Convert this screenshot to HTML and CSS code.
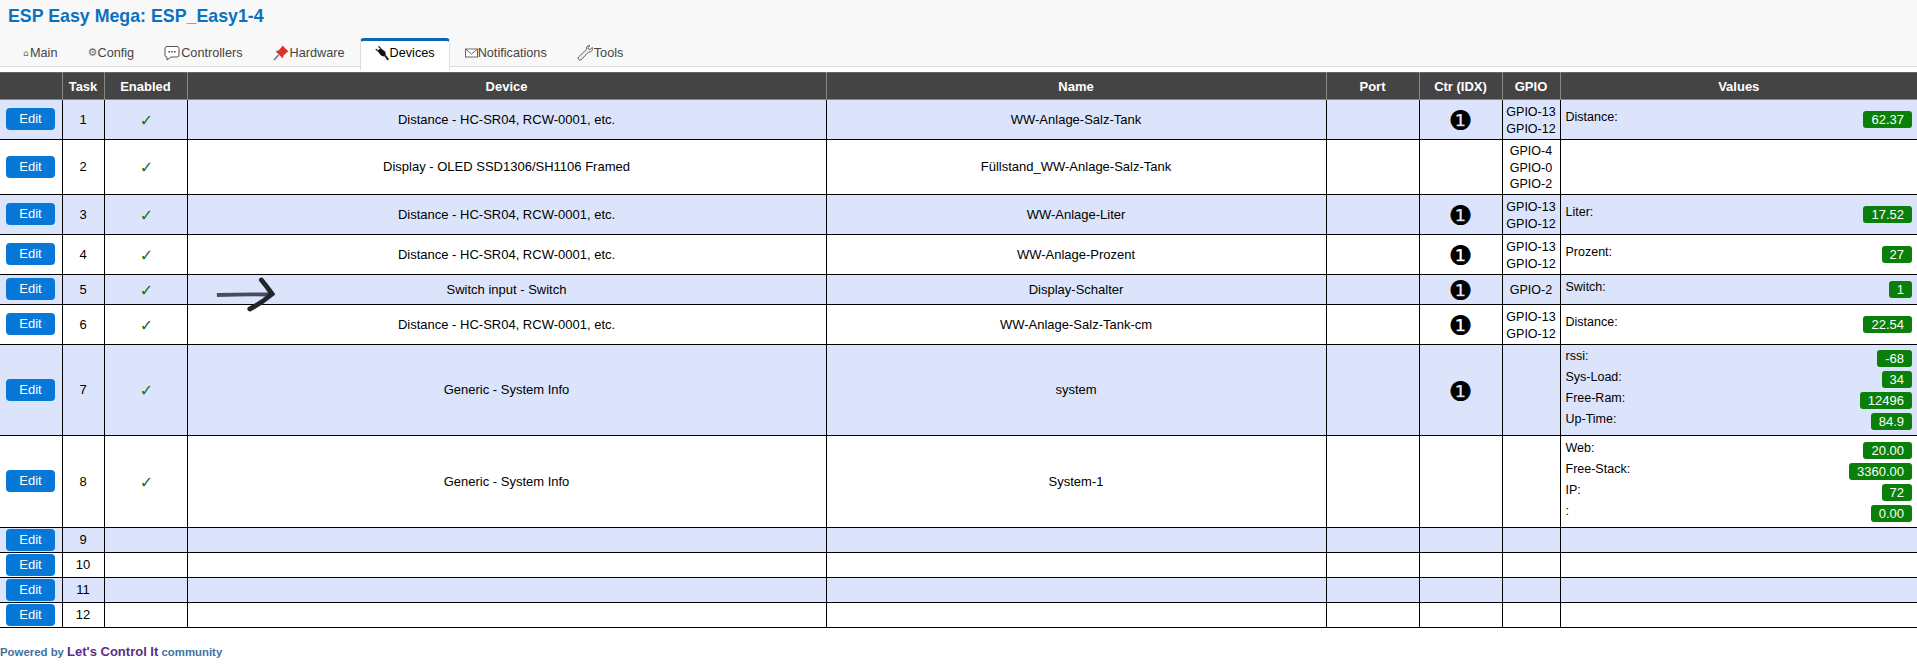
FILE: index.html
```html
<!DOCTYPE html>
<html lang="en">
<head>
  <meta charset="UTF-8">
  <title>ESP Easy Mega: ESP_Easy1-4</title>
  <link rel="stylesheet" href="styles.css">
</head>
<body>
  <header class="headermenu">
    <h1>ESP Easy Mega: ESP_Easy1-4</h1>
    <nav class="menubar">
      <a class="menu"><span class="glyph glyph-home">&#8962;</span>Main</a>
      <a class="menu"><span class="glyph">&#9881;</span>Config</a>
      <a class="menu">
        <svg class="icon icon-wide" viewBox="0 0 16 16"><path d="M3 1.500h10a2 2 0 0 1 2 2v6.500a2 2 0 0 1-2 2H7l-4 3v-3a2 2 0 0 1-2-2V3.500a2 2 0 0 1 2-2z" fill="#fff" stroke="#555"/><path d="M4.500 6.800h1.400M7.300 6.800h1.400M10.100 6.800h1.400" stroke="#333" stroke-width="1.400"/></svg>Controllers
      </a>
      <a class="menu">
        <svg class="icon icon-wide" viewBox="0 0 16 16"><path d="M1 15l4.500-5" stroke="#777" stroke-width="1.600"/><path d="M9.500.5l6 6-1.700 1-3.300 3-.7 3-7.300-7.300 3-.7 3-3.300z" fill="#d8352a"/></svg>Hardware
      </a>
      <a class="menu active">
        <svg class="icon" viewBox="0 0 14 15"><path d="M.8 3.500l2 2M3.500.8l2 2" stroke="#333" stroke-width="1.300"/><path d="M2.500 5.500l3-3 4.500 3.500 1 3-2 2-3-1z" fill="#111"/><path d="M10 10l3.300 4.300" stroke="#222" stroke-width="2"/></svg>Devices
      </a>
      <a class="menu">
        <svg class="icon icon-mail" viewBox="0 0 13 15"><rect x=".5" y="3.500" width="12" height="8" fill="#fff" stroke="#666"/><path d="M1 4l5.500 4.500L12 4" fill="none" stroke="#666"/></svg>Notifications
      </a>
      <a class="menu">
        <svg class="icon icon-wide" viewBox="0 0 16 16"><path d="M15.300 2.500l-2.300 2-1.600-.5-.4-1.600L13 .6C10.800 0 8.800 1.800 9.500 4.300L1.500 12a2 2 0 0 0 2.600 2.900L11.800 6.800c2.500.6 4.300-1.400 3.500-4.300z" fill="#eee" stroke="#555" stroke-width=".9"/></svg>Tools
      </a>
    </nav>
  </header>

  <table class="multirow">
    <colgroup>
      <col class="col-edit"><col class="col-task"><col class="col-enabled"><col class="col-device">
      <col class="col-name"><col class="col-port"><col class="col-ctr"><col class="col-gpio"><col class="col-values">
    </colgroup>
    <thead>
      <tr>
        <th></th><th>Task</th><th>Enabled</th><th>Device</th><th>Name</th><th>Port</th><th>Ctr (IDX)</th><th>GPIO</th><th>Values</th>
      </tr>
    </thead>
    <tbody>
      <tr class="row-std">
        <td><a class="button">Edit</a></td><td>1</td><td class="check">&#10003;</td>
        <td>Distance - HC-SR04, RCW-0001, etc.</td><td>WW-Anlage-Salz-Tank</td><td></td>
        <td class="ctr">&#10102;</td><td class="gpio">GPIO-13<br>GPIO-12</td>
        <td class="values">
          <div class="val"><span class="val-name">Distance:</span><span class="val-badge">62.37</span></div>
        </td>
      </tr>
      <tr class="row-gpio3">
        <td><a class="button">Edit</a></td><td>2</td><td class="check">&#10003;</td>
        <td>Display - OLED SSD1306/SH1106 Framed</td><td>Füllstand_WW-Anlage-Salz-Tank</td><td></td>
        <td></td><td class="gpio">GPIO-4<br>GPIO-0<br>GPIO-2</td>
        <td class="values"></td>
      </tr>
      <tr class="row-std">
        <td><a class="button">Edit</a></td><td>3</td><td class="check">&#10003;</td>
        <td>Distance - HC-SR04, RCW-0001, etc.</td><td>WW-Anlage-Liter</td><td></td>
        <td class="ctr">&#10102;</td><td class="gpio">GPIO-13<br>GPIO-12</td>
        <td class="values">
          <div class="val"><span class="val-name">Liter:</span><span class="val-badge">17.52</span></div>
        </td>
      </tr>
      <tr class="row-std">
        <td><a class="button">Edit</a></td><td>4</td><td class="check">&#10003;</td>
        <td>Distance - HC-SR04, RCW-0001, etc.</td><td>WW-Anlage-Prozent</td><td></td>
        <td class="ctr">&#10102;</td><td class="gpio">GPIO-13<br>GPIO-12</td>
        <td class="values">
          <div class="val"><span class="val-name">Prozent:</span><span class="val-badge">27</span></div>
        </td>
      </tr>
      <tr class="row-switch">
        <td><a class="button">Edit</a></td><td>5</td><td class="check">&#10003;</td>
        <td class="has-arrow">
          <svg class="arrow" viewBox="0 0 64 36"><path d="M4 18.500q30-1 55-.5" fill="none" stroke="#4a4a60" stroke-width="4"/><path d="M50 3q5 6 11 14.500Q50 27 38 33" fill="none" stroke="#24242c" stroke-width="5" stroke-linecap="round"/></svg>
          Switch input - Switch
        </td>
        <td>Display-Schalter</td><td></td>
        <td class="ctr">&#10102;</td><td class="gpio">GPIO-2</td>
        <td class="values">
          <div class="val"><span class="val-name">Switch:</span><span class="val-badge">1</span></div>
        </td>
      </tr>
      <tr class="row-std">
        <td><a class="button">Edit</a></td><td>6</td><td class="check">&#10003;</td>
        <td>Distance - HC-SR04, RCW-0001, etc.</td><td>WW-Anlage-Salz-Tank-cm</td><td></td>
        <td class="ctr">&#10102;</td><td class="gpio">GPIO-13<br>GPIO-12</td>
        <td class="values">
          <div class="val"><span class="val-name">Distance:</span><span class="val-badge">22.54</span></div>
        </td>
      </tr>
      <tr class="row-sys">
        <td><a class="button">Edit</a></td><td>7</td><td class="check">&#10003;</td>
        <td>Generic - System Info</td><td>system</td><td></td>
        <td class="ctr">&#10102;</td><td></td>
        <td class="values">
          <div class="val"><span class="val-name">rssi:</span><span class="val-badge">-68</span></div>
          <div class="val"><span class="val-name">Sys-Load:</span><span class="val-badge">34</span></div>
          <div class="val"><span class="val-name">Free-Ram:</span><span class="val-badge">12496</span></div>
          <div class="val"><span class="val-name">Up-Time:</span><span class="val-badge">84.9</span></div>
        </td>
      </tr>
      <tr class="row-sys-b">
        <td><a class="button">Edit</a></td><td>8</td><td class="check">&#10003;</td>
        <td>Generic - System Info</td><td>System-1</td><td></td>
        <td></td><td></td>
        <td class="values">
          <div class="val"><span class="val-name">Web:</span><span class="val-badge">20.00</span></div>
          <div class="val"><span class="val-name">Free-Stack:</span><span class="val-badge">3360.00</span></div>
          <div class="val"><span class="val-name">IP:</span><span class="val-badge">72</span></div>
          <div class="val"><span class="val-name">:</span><span class="val-badge">0.00</span></div>
        </td>
      </tr>
      <tr class="row-empty"><td><a class="button">Edit</a></td><td>9</td><td></td><td></td><td></td><td></td><td></td><td></td><td></td></tr>
      <tr class="row-empty"><td><a class="button">Edit</a></td><td>10</td><td></td><td></td><td></td><td></td><td></td><td></td><td></td></tr>
      <tr class="row-empty"><td><a class="button">Edit</a></td><td>11</td><td></td><td></td><td></td><td></td><td></td><td></td><td></td></tr>
      <tr class="row-empty"><td><a class="button">Edit</a></td><td>12</td><td></td><td></td><td></td><td></td><td></td><td></td><td></td></tr>
    </tbody>
  </table>

  <footer class="footer">
    <span class="powered">Powered by</span>
    <a class="lci">Let's Control It</a>
    <span class="powered">community</span>
  </footer>
</body>
</html>
```

FILE: styles.css
```css
body {
  margin: 0;
  background: #fff;
  color: #000;
  font-family: "Liberation Sans", Arial, sans-serif;
  font-size: 13px;
}

.headermenu {
  height: 66px;
  margin-bottom: 5px;
  background: #f8f8f8;
  border-bottom: 1px solid #ddd;
}

h1 {
  margin: 0;
  padding: 6px 0 0 8px;
  height: 38px;
  color: #0b70bd;
  font-size: 17.8px;
  line-height: 20px;
  font-weight: bold;
  box-sizing: border-box;
}

.menubar {
  display: flex;
  padding-left: 8px;
}

.menu {
  display: flex;
  align-items: center;
  box-sizing: border-box;
  height: 28px;
  padding: 0 14px 2px;
  border: solid transparent;
  border-width: 3px 1px 0;
  border-radius: 4px 4px 0 0;
  color: #444;
  font-size: 12.7px;
  white-space: nowrap;
}

.menu.active {
  height: 32px;
  padding-bottom: 6px;
  background: #fff;
  border-color: #0a66b0 #ddd #fff;
  color: #000;
}

.glyph {
  width: 10px;
  font-family: "DejaVu Sans", sans-serif;
  font-size: 11px;
  color: #666;
}

.glyph-home {
  width: 7px;
  font-size: 9px;
}

.icon {
  width: 14px;
  height: 16px;
  margin-right: 1px;
}

.icon-wide {
  width: 16px;
}

.icon-mail {
  width: 13px;
  margin-right: 0;
}

.multirow {
  width: 1917px;
  table-layout: fixed;
  border-collapse: collapse;
}

.col-edit { width: 62px; }
.col-task { width: 42px; }
.col-enabled { width: 83px; }
.col-device { width: 639px; }
.col-name { width: 500px; }
.col-port { width: 93px; }
.col-ctr { width: 83px; }
.col-gpio { width: 58px; }
.col-values { width: 357px; }

th {
  height: 26px;
  padding: 0;
  background: #444;
  color: #fff;
  font-size: 13px;
  font-weight: bold;
  border: 1px solid #888;
  border-top-color: #666;
}

td {
  padding: 1px 0 0;
  border: 1px solid #000;
  text-align: center;
  line-height: 16.6px;
}

th:first-child,
td:first-child { border-left: 0; }

th:last-child,
td:last-child { border-right: 0; }

tbody tr:nth-child(odd) { background: #dbe4fa; }

.row-std { height: 40px; }
.row-gpio3 { height: 55px; }
.row-switch { height: 30px; }
.row-sys { height: 91px; }
.row-sys-b { height: 92px; }
.row-empty { height: 25px; }

.button {
  display: block;
  width: 49px;
  height: 22px;
  margin: -2px 0 0 6px;
  background: #0878d8;
  border-radius: 4px;
  color: #fff;
  line-height: 21px;
  text-align: center;
}

.check {
  padding: 3px 0 0 2px;
  color: #1a6b1a;
  font-family: "DejaVu Sans", sans-serif;
  font-size: 16px;
}

.ctr {
  padding-top: 4px;
  font-family: "DejaVu Sans", sans-serif;
  font-size: 27px;
}

.gpio {
  padding-top: 2px;
  font-size: 12.5px;
}

.values {
  padding: 0 5px;
  text-align: left;
}

.val {
  display: flex;
  justify-content: space-between;
  height: 21px;
}

.val-name {
  font-size: 12.5px;
  line-height: 16px;
}

.val-badge {
  height: 17px;
  margin-top: 2px;
  padding: 0 8px;
  background: #0a800a;
  border-radius: 3px;
  color: #fff;
  line-height: 17px;
}

.has-arrow {
  position: relative;
}

.arrow {
  position: absolute;
  left: 25px;
  top: 2px;
  width: 62px;
  height: 35px;
  filter: blur(0.4px);
}

.footer {
  margin-top: 16px;
  font-size: 11.4px;
  font-weight: bold;
  line-height: 16px;
}

.powered {
  color: #3f729f;
}

.lci {
  color: #5a2f86;
  font-size: 13px;
}
```
